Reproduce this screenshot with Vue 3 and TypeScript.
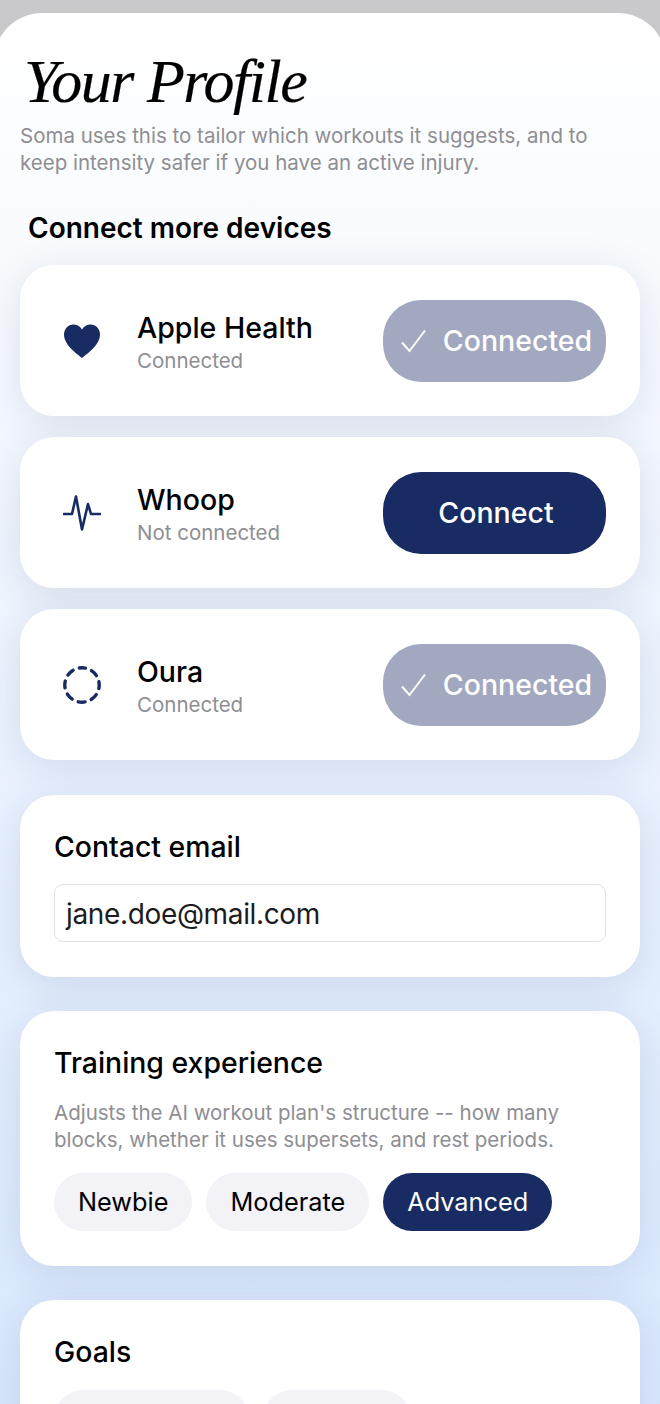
<template>
  <div class="page">
    <main class="sheet">
      <h1 class="title">Your Profile</h1>
      <p class="intro">Soma uses this to tailor which workouts it suggests, and to keep intensity safer if you have an active injury.</p>
      <h2 class="section-title">Connect more devices</h2>

      <div class="devices">
        <div v-for="device in devices" :key="device.name" class="card device">
          <div class="device-icon">
            <svg v-if="device.icon === 'heart'" width="38" height="36" viewBox="0 0 38 36">
              <path d="M19 35C17 33 1 23 1 11.500C1 5.500 5.500 1.500 10.500 1.500C14 1.500 17 3.300 19 6.500C21 3.300 24 1.500 27.500 1.500C32.500 1.500 37 5.500 37 11.500C37 23 21 33 19 35Z" fill="#182b62" />
            </svg>
            <svg v-else-if="device.icon === 'pulse'" width="38" height="38" viewBox="0 0 38 38">
              <path d="M1 20H9L13 2.500L19 35.500L25 10L28 20H37" fill="none" stroke="#182b62" stroke-width="2.600" stroke-linejoin="round" stroke-linecap="round" />
            </svg>
            <svg v-else width="40" height="40" viewBox="0 0 40 40">
              <circle cx="20" cy="20" r="17.200" fill="none" stroke="#182b62" stroke-width="3.400" stroke-dasharray="7 6.510" stroke-dashoffset="3.500" stroke-linecap="round" transform="rotate(-90 20 20)" />
            </svg>
          </div>
          <div class="device-text">
            <div class="device-name">{{ device.name }}</div>
            <div class="device-status">{{ device.connected ? 'Connected' : 'Not connected' }}</div>
          </div>
          <button class="connect" :class="{ 'is-connected': device.connected }">
            <svg v-if="device.connected" width="28" height="24" viewBox="0 0 28 24">
              <path d="M2 13.500L9.500 22L25 1.500" fill="none" stroke="#fff" stroke-width="2" />
            </svg>
            <span>{{ device.connected ? 'Connected' : 'Connect' }}</span>
          </button>
        </div>
      </div>

      <section class="card panel email-panel">
        <h3 class="panel-title">Contact email</h3>
        <div class="email-input">jane.doe@mail.com</div>
      </section>

      <section class="card panel">
        <h3 class="panel-title">Training experience</h3>
        <p class="panel-note">Adjusts the AI workout plan's structure -- how many blocks, whether it uses supersets, and rest periods.</p>
        <div class="chips">
          <span v-for="level in levels" :key="level" class="chip" :class="{ active: level === 'Advanced' }">{{ level }}</span>
        </div>
      </section>

      <section class="card panel">
        <h3 class="panel-title">Goals</h3>
        <div class="chips goal-chips">
          <span class="chip goal-a"></span>
          <span class="chip goal-b"></span>
        </div>
      </section>
    </main>
  </div>
</template>

<script setup lang="ts">
interface Device {
  name: string;
  icon: 'heart' | 'pulse' | 'ring';
  connected: boolean;
}

const devices: Device[] = [
  { name: 'Apple Health', icon: 'heart', connected: true },
  { name: 'Whoop', icon: 'pulse', connected: false },
  { name: 'Oura', icon: 'ring', connected: true },
];

const levels = ['Newbie', 'Moderate', 'Advanced'];
</script>

<style>
html,
body {
  margin: 0;
  background: #c9c9cb;
}
</style>

<style scoped>
.page {
  width: 660px;
  height: 1404px;
  overflow: hidden;
  padding-top: 13px;
  box-sizing: border-box;
  background: #c9c9cb;
  font-family: Inter, 'Liberation Sans', sans-serif;
}

.sheet {
  height: 1391px;
  box-sizing: border-box;
  margin: 0 -6px;
  padding: 0 26px;
  border-radius: 48px 48px 0 0;
  background: linear-gradient(180deg, #ffffff 0%, #f7fafe 20%, #ebf3fe 50%, #d9e8fe 100%);
}

.title {
  margin: 0;
  padding: 33px 0 0 4px;
  font-family: 'Liberation Serif', serif;
  font-style: italic;
  font-weight: 400;
  font-size: 62px;
  line-height: 70px;
  letter-spacing: -1.500px;
  -webkit-text-stroke: 0.2px #000;
  color: #000;
}

.intro {
  margin: 6px 0 0;
  font-size: 20.500px;
  line-height: 27px;
  color: #8e8e93;
}

.section-title {
  margin: 35px 0 0 8px;
  font-size: 28px;
  line-height: 34px;
  font-weight: 600;
  color: #000;
}

.devices {
  display: flex;
  flex-direction: column;
  gap: 21px;
  margin-top: 20px;
}

.card {
  background: #fff;
  border-radius: 34px;
  box-shadow: 0 8px 40px rgba(30, 50, 100, 0.12);
}

.device {
  display: flex;
  align-items: center;
  height: 151px;
  padding: 0 34px 0 0;
}

.device-icon {
  width: 117px;
  flex: none;
  display: flex;
  justify-content: center;
  padding-left: 6px;
  box-sizing: border-box;
}

.device-text {
  flex: 1;
  padding-top: 4px;
}

.device-name {
  font-size: 28.500px;
  line-height: 34px;
  font-weight: 500;
  color: #000;
}

.device-status {
  margin-top: 3px;
  font-size: 20.500px;
  line-height: 26px;
  color: #8e8e93;
}

.connect {
  display: flex;
  align-items: center;
  justify-content: center;
  gap: 15px;
  width: 223px;
  height: 82px;
  padding: 0 0 0 3px;
  border: none;
  border-radius: 38px;
  background: #182b62;
  color: #fff;
  font-family: inherit;
  font-size: 28.500px;
  font-weight: 500;
}

.connect.is-connected {
  background: #a2a8bf;
}

.panel {
  margin-top: 34px;
  padding: 35px 34px;
}

.devices + .panel {
  margin-top: 35px;
}

.panel-title {
  margin: 0;
  font-size: 28.400px;
  line-height: 34px;
  font-weight: 500;
  color: #000;
}

.email-input {
  margin-top: 20px;
  height: 58px;
  box-sizing: border-box;
  padding: 0 11px;
  border: 1px solid #e2e2e6;
  border-radius: 9px;
  font-size: 28px;
  letter-spacing: -0.350px;
  line-height: 58px;
  color: #1c1c1e;
}

.panel-note {
  margin: 19px 0 0;
  font-size: 20.500px;
  line-height: 27px;
  color: #8e8e93;
}

.chips {
  display: flex;
  gap: 14px;
  margin-top: 20px;
}

.chip {
  height: 58px;
  padding: 0 24px;
  border-radius: 29px;
  background: #f2f2f7;
  font-size: 25.300px;
  line-height: 58px;
  color: #000;
}

.chip.active {
  background: #182b62;
  color: #fff;
}

.goal-chips {
  margin-top: 21px;
}

.goal-a {
  width: 147px;
}

.goal-b {
  width: 100px;
}
</style>
